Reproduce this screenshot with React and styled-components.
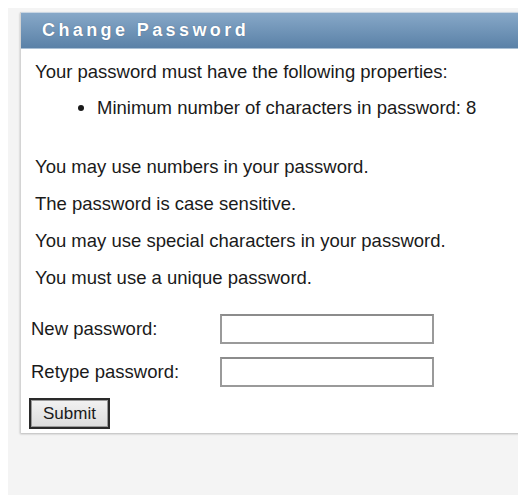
import React from 'react'
import styled, { createGlobalStyle } from 'styled-components'

const GlobalStyle = createGlobalStyle`
  html, body {
    overflow: hidden;
  }
  body {
    margin: 8px 0 0 8px;
    background: #ffffff;
    font-family: "Liberation Sans", Arial, sans-serif;
  }
`

const Page = styled.div`
  background: #f4f4f4;
  height: 487px;
  padding: 4px 0 0 12px;
  box-sizing: border-box;
`

const Panel = styled.div`
  width: 520px;
  background: #ffffff;
  border-left: 1px solid #d4d4d4;
  box-shadow: 0 1px 2px rgba(0, 0, 0, 0.25);
  padding-bottom: 4px;
`

const Header = styled.div`
  height: 37px;
  box-sizing: border-box;
  display: flex;
  align-items: center;
  padding-left: 21px;
  background: linear-gradient(#87a8c8, #5a81a7);
  border-top: 1px solid #c9d6e3;
  border-bottom: 1px solid #a9bfd4;
  color: #ffffff;
  font-size: 18px;
  font-weight: bold;
  letter-spacing: 3.4px;
  text-shadow: 0 0 1px rgba(40, 60, 90, 0.6);
`

const Body = styled.div`
  padding: 12px 0 0 14px;
  color: #1a1a1a;
  font-size: 18.5px;
`

const Line = styled.p`
  margin: 0 0 ${({ gap }) => gap ?? 16}px;
  line-height: 21px;
`

const Rules = styled.ul`
  margin: 0 0 38px;
  padding-left: 62px;
  line-height: 21px;

  li::marker {
    font-size: 20px;
  }
`

const Form = styled.div`
  display: grid;
  grid-template-columns: 189px 214px;
  row-gap: 13px;
  align-items: center;
  margin: 26px 0 0 -4px;
`

const Label = styled.label`
  color: #1a1a1a;
`

const Field = styled.input`
  height: 30px;
  box-sizing: border-box;
  border: 2px solid #9a9a9a;
  border-top-color: #8c8c8c;
  background: #ffffff;
  padding: 0 4px;
  font-size: 14px;
`

const Button = styled.button`
  margin: 11px 0 0 -6px;
  width: 81px;
  height: 31px;
  border: 2px solid #2a2a2a;
  box-shadow: inset 0 0 0 1px #9a9a9a;
  background: linear-gradient(#f2f2f2, #dcdcdc);
  font-family: "Liberation Sans", Arial, sans-serif;
  font-size: 17px;
  color: #1a1a1a;
  padding: 0;
`

const rules = [
  'You may use numbers in your password.',
  'The password is case sensitive.',
  'You may use special characters in your password.',
  'You must use a unique password.',
]

export default function App() {
  return (
    <>
      <GlobalStyle />
      <Page>
        <Panel>
          <Header>Change Password</Header>
          <Body>
            <Line gap={15}>Your password must have the following properties:</Line>
            <Rules>
              <li>Minimum number of characters in password: 8</li>
            </Rules>
            {rules.map((text) => (
              <Line key={text}>{text}</Line>
            ))}
            <Form>
              <Label>New password:</Label>
              <Field type="password" />
              <Label>Retype password:</Label>
              <Field type="password" />
            </Form>
            <Button>Submit</Button>
          </Body>
        </Panel>
      </Page>
    </>
  )
}
